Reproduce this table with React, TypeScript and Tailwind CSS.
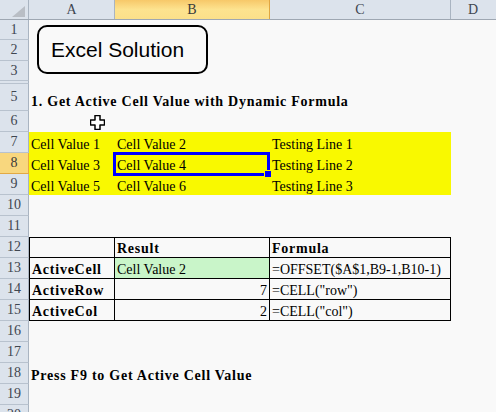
import React from "react";

type CellProps = {
  text?: string;
  cls?: string;
  bold?: boolean;
  right?: boolean;
};

const serif = "font-['Liberation_Serif','Times_New_Roman',serif]";

function Cell({ text, cls = "", bold, right, w }: CellProps & { w: string }) {
  return (
    <div
      className={`${w} h-full flex items-end pb-[1px] px-[2px] whitespace-nowrap ${right ? "justify-end" : ""} ${cls}`}
    >
      {text && (
        <span className={`text-[14px] leading-[14px] text-black ${bold ? "font-bold tracking-[0.75px]" : ""}`}>{text}</span>
      )}
    </div>
  );
}

function Row({
  n,
  h,
  a = {},
  b = {},
  c = {},
  active,
  labelEnd,
}: {
  n: number;
  h: string;
  a?: CellProps;
  b?: CellProps;
  c?: CellProps;
  active?: boolean;
  labelEnd?: boolean;
}) {
  return (
    <div className={`flex ${h} shrink-0`}>
      <div
        className={`w-[29px] shrink-0 flex justify-center overflow-hidden border-r text-[14px] leading-[16px] ${
          labelEnd ? "items-end" : "items-center"
        } ${
          active
            ? "bg-[#f8d77e] border-b border-b-[#e2a944] border-r-[#e2a944] text-[#3a3a3a]"
            : "bg-[#dce3ec] border-b border-b-[#b8c2ce] border-r-[#a9b4c1] text-[#3f4650]"
        }`}
      >
        {n}
      </div>
      <Cell w="w-[86px] shrink-0" {...a} />
      <Cell w="w-[155px] shrink-0" {...b} />
      <Cell w="w-[181px] shrink-0" {...c} />
      <div className="flex-1" />
    </div>
  );
}

const yellow = "bg-[#f9f900]";
const tA = "border-l border-r border-b border-black";
const tB = "border-r border-b border-black";

export default function App() {
  return (
    <div className={`w-[496px] h-[412px] overflow-hidden bg-[#f9f9f9] relative ${serif}`}>
      {/* column headers */}
      <div className="flex h-[20px] border-b border-[#9ea7b2] bg-[#dce3ec] text-[14px] leading-[16px] text-[#3f4650]">
        <div className="w-[29px] shrink-0 border-r border-[#a9b4c1] relative">
          <svg className="absolute left-[12px] top-[6px]" width="13" height="11" viewBox="0 0 13 11">
            <polygon points="13,0 13,11 0,11" fill="#b9bec5" />
          </svg>
        </div>
        <div className="w-[86px] shrink-0 border-r border-[#a9b4c1] flex items-center justify-center">A</div>
        <div className="w-[155px] shrink-0 border-r border-[#e1a640] bg-gradient-to-b from-[#f7c869] via-[#fde38f] to-[#fbe08a] flex items-center justify-center text-[#3a3a3a]">
          B
        </div>
        <div className="w-[181px] shrink-0 border-r border-[#a9b4c1] flex items-center justify-center">C</div>
        <div className="flex-1 flex items-center justify-center pr-[1px]">D</div>
      </div>

      <div className="flex flex-col">
        <Row n={1} h="h-[20px]" />
        <Row n={2} h="h-[21px]" />
        <Row n={3} h="h-[20px]" />
        <Row n={4} h="h-[3px]" labelEnd />
        <Row n={5} h="h-[27px]" a={{ text: "1. Get Active Cell Value with Dynamic Formula", bold: true, cls: "pb-[2px]" }} />
        <Row n={6} h="h-[21px]" />
        <Row
          n={7}
          h="h-[21px]"
          a={{ text: "Cell Value 1", cls: yellow }}
          b={{ text: "Cell Value 2", cls: yellow }}
          c={{ text: "Testing Line 1", cls: yellow }}
        />
        <Row
          n={8}
          h="h-[21px]"
          active
          a={{ text: "Cell Value 3", cls: yellow }}
          b={{ text: "Cell Value 4", cls: yellow }}
          c={{ text: "Testing Line 2", cls: yellow }}
        />
        <Row
          n={9}
          h="h-[21px]"
          a={{ text: "Cell Value 5", cls: yellow }}
          b={{ text: "Cell Value 6", cls: yellow }}
          c={{ text: "Testing Line 3", cls: yellow }}
        />
        <Row n={10} h="h-[21px]" />
        <Row n={11} h="h-[21px]" />
        <Row
          n={12}
          h="h-[21px]"
          a={{ cls: `${tA} border-t` }}
          b={{ text: "Result", bold: true, cls: `${tB} border-t` }}
          c={{ text: "Formula", bold: true, cls: `${tB} border-t` }}
        />
        <Row
          n={13}
          h="h-[21px]"
          a={{ text: "ActiveCell", bold: true, cls: tA }}
          b={{ text: "Cell Value 2", cls: `${tB} bg-[#c9f5c9]` }}
          c={{ text: "=OFFSET($A$1,B9-1,B10-1)", cls: tB }}
        />
        <Row
          n={14}
          h="h-[21px]"
          a={{ text: "ActiveRow", bold: true, cls: tA }}
          b={{ text: "7", right: true, cls: tB }}
          c={{ text: '=CELL("row")', cls: tB }}
        />
        <Row
          n={15}
          h="h-[21px]"
          a={{ text: "ActiveCol", bold: true, cls: tA }}
          b={{ text: "2", right: true, cls: tB }}
          c={{ text: '=CELL("col")', cls: tB }}
        />
        <Row n={16} h="h-[21px]" />
        <Row n={17} h="h-[21px]" />
        <Row n={18} h="h-[21px]" a={{ text: "Press F9 to Get Active Cell Value", bold: true }} />
        <Row n={19} h="h-[21px]" />
        <Row n={20} h="h-[21px]" />
      </div>

      {/* text box shape */}
      <div className="absolute left-[37px] top-[25px] w-[171px] h-[49px] border-2 border-black rounded-[10px] bg-[#f9f9f9] flex items-center pl-[12px]">
        <span className="font-['Liberation_Sans',Arial,sans-serif] text-[21px] leading-[22px] text-black">Excel Solution</span>
      </div>

      {/* selection */}
      <div className="absolute left-[113px] top-[152px] w-[157px] h-[24px] border-[3px] border-[#0000ff]" />
      <div className="absolute left-[265px] top-[171px] w-[6px] h-[6px] bg-[#0000ff] outline outline-1 outline-[#f9f900]" />

      {/* cell cursor */}
      <svg className="absolute left-[90px] top-[115px]" width="15" height="15" viewBox="0 0 15 15">
        <polygon
          points="5,0.5 10,0.5 10,5 14.5,5 14.5,10 10,10 10,14.5 5,14.5 5,10 0.5,10 0.5,5 5,5"
          fill="#fff"
          stroke="#000"
          strokeWidth="1.5"
          strokeLinejoin="round"
        />
      </svg>
    </div>
  );
}
